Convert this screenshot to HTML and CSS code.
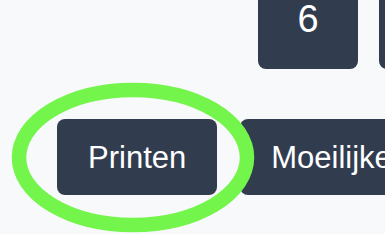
FILE: index.html
```html
<!DOCTYPE html>
<html>
<head>
<meta charset="utf-8">
<link rel="stylesheet" href="styles.css">
</head>
<body>
<div class="page">
  <div class="tiles">
    <div class="tile">6</div>
    <div class="tile"></div>
  </div>
  <div class="actions">
    <button class="btn">Printen</button>
    <button class="btn">Moeilijker</button>
  </div>
  <svg class="mark" width="385" height="234" viewBox="0 0 385 234">
    <ellipse cx="133" cy="157.5" rx="114" ry="67.5" fill="none" stroke="#73f54b" stroke-width="14.5"/>
  </svg>
</div>
</body>
</html>
```
FILE: styles.css
```css
html, body {
  margin: 0;
  padding: 0;
  background: #f8f9fb;
  overflow: hidden;
}
.page {
  position: relative;
  width: 385px;
  height: 234px;
  overflow: hidden;
  font-family: "Liberation Sans", Arial, sans-serif;
}
.tiles {
  display: flex;
  gap: 21px;
  padding-left: 258px;
  margin-top: -30px;
}
.tile {
  flex: none;
  width: 100px;
  height: 99px;
  box-sizing: border-box;
  padding-top: 30px;
  background: #313d4f;
  border-radius: 8px;
  color: #ffffff;
  font-size: 38px;
  line-height: 1;
  text-align: center;
}
.actions {
  display: flex;
  gap: 23px;
  padding-left: 57px;
  margin-top: 50px;
}
.btn {
  flex: none;
  height: 76px;
  padding: 0 31px;
  border: none;
  border-radius: 8px;
  background: #313d4f;
  color: #ffffff;
  font-family: "Liberation Sans", Arial, sans-serif;
  font-size: 31px;
  line-height: 1;
  white-space: nowrap;
}
.mark {
  position: absolute;
  left: 0;
  top: 0;
  pointer-events: none;
}
```
